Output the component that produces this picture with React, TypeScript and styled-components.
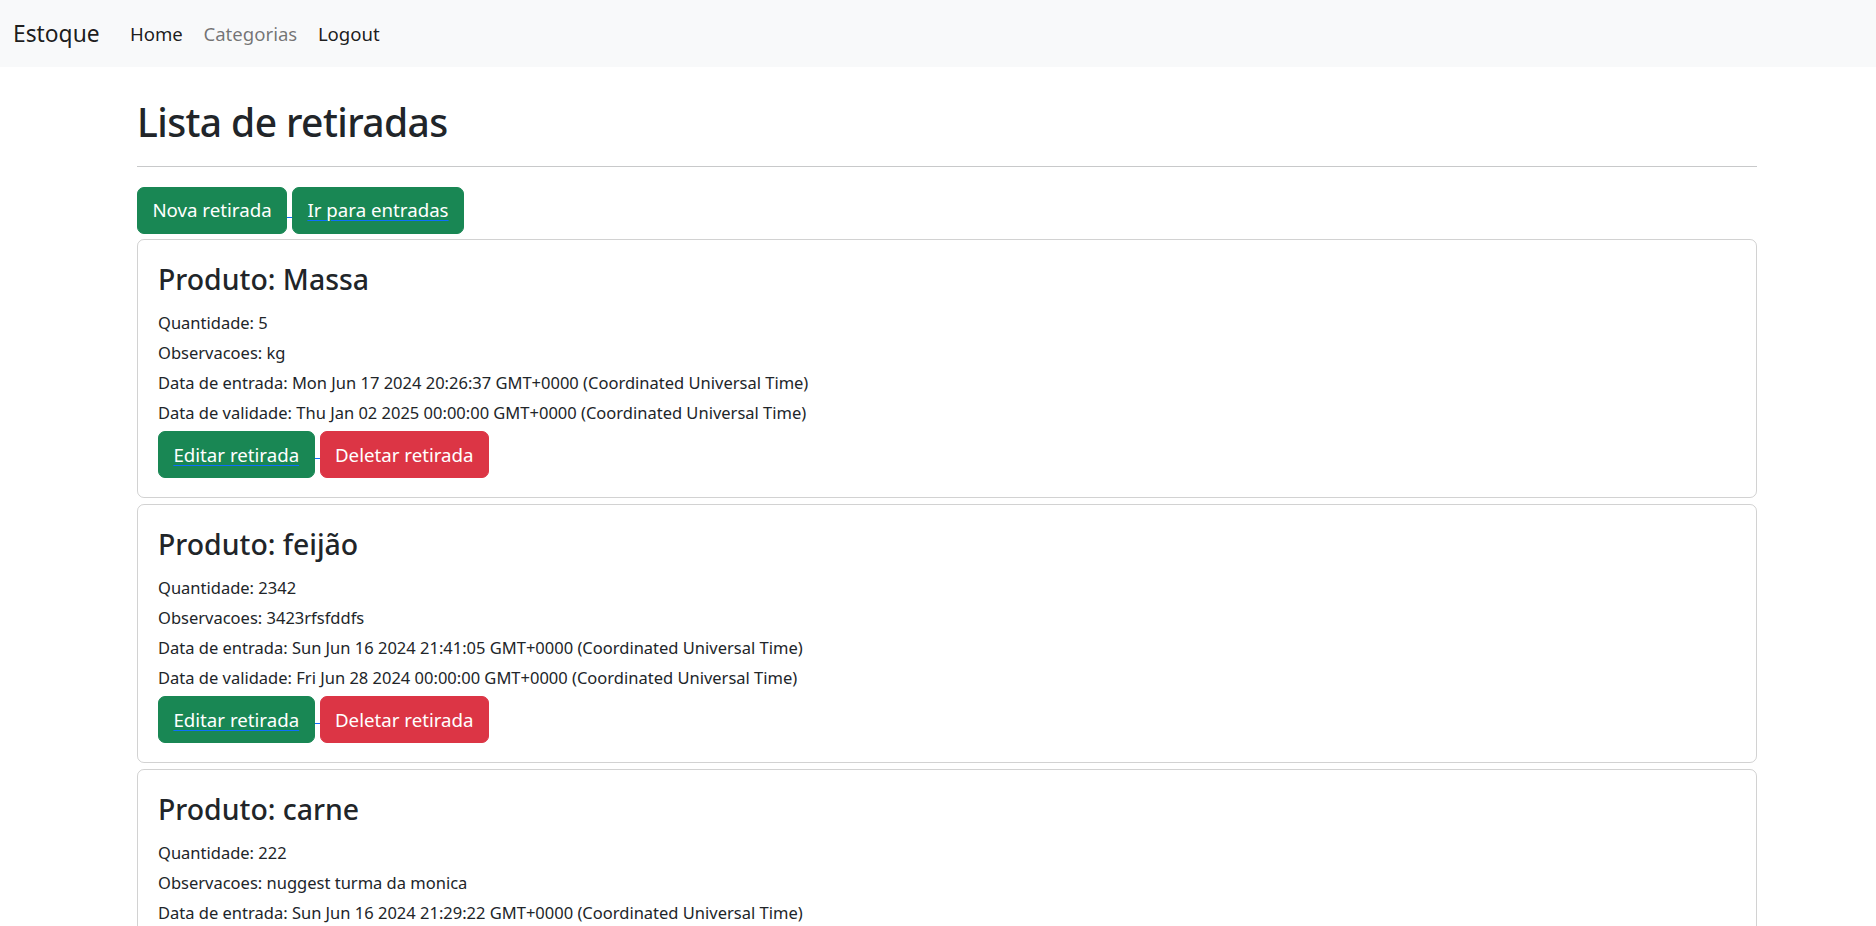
import React from 'react';
import styled, { createGlobalStyle } from 'styled-components';

const GlobalStyle = createGlobalStyle`
  * { box-sizing: border-box; }
  body {
    margin: 0;
    font-family: "Noto Sans", "Open Sans", sans-serif;
    color: #212529;
    background: #ffffff;
  }
`;

const NavBar = styled.nav`
  height: 67px;
  background: #f8f9fa;
  display: flex;
  align-items: center;
  padding: 0 13px;
`;

const Brand = styled.a`
  font-size: 22.8px;
  color: rgba(0, 0, 0, 0.9);
  margin-right: 20px;
  text-decoration: none;
`;

const NavLink = styled.a<{ $muted?: boolean }>`
  font-size: 18.6px;
  padding: 0 10.3px;
  color: ${(p) => (p.$muted ? 'rgba(0, 0, 0, 0.55)' : 'rgba(0, 0, 0, 0.9)')};
  text-decoration: none;
`;

const Main = styled.main`
  padding: 30px 119px 40px 137px;
`;

const Title = styled.h1`
  margin: 0;
  font-size: 39px;
  font-weight: 500;
  letter-spacing: -0.6px;
  line-height: 50px;
`;

const Rule = styled.hr`
  margin: 19px 0 20px;
  border: 0;
  border-top: 1px solid #c8c9ca;
`;

const ButtonRow = styled.div`
  display: flex;
  align-items: flex-start;
`;

const Button = styled.button<{ $variant: 'success' | 'danger'; $underline?: boolean }>`
  height: 47px;
  padding: 0 14.4px;
  border: 1px solid ${(p) => (p.$variant === 'success' ? '#198754' : '#dc3545')};
  background: ${(p) => (p.$variant === 'success' ? '#198754' : '#dc3545')};
  color: #ffffff;
  border-radius: 7px;
  font-family: inherit;
  font-size: 18.7px;
  line-height: 1.5;
  cursor: pointer;
  text-decoration: ${(p) => (p.$underline ? 'underline' : 'none')};
  text-decoration-color: #0d6efd;
  text-decoration-thickness: 1px;
  text-underline-offset: 3px;
`;

const Joiner = styled.span<{ $top: number }>`
  width: 5px;
  height: 1px;
  background: #0d6efd;
  margin-top: ${(p) => p.$top}px;
`;

const CardList = styled.div`
  display: flex;
  flex-direction: column;
  gap: 6px;
  margin-top: 5px;
`;

const Card = styled.div`
  border: 1px solid rgba(0, 0, 0, 0.175);
  border-radius: 7px;
  padding: 22px 20px 18.5px;
`;

const CardTitle = styled.h4`
  margin: 0 0 14px;
  font-size: 28.4px;
  font-weight: 500;
  line-height: 1.2;
`;

const Detail = styled.p`
  margin: 0 0 4.8px;
  font-size: 16.5px;
  line-height: 25.2px;
`;

const CardActions = styled(ButtonRow)`
  margin-top: 6px;
`;

type Retirada = {
  produto: string;
  quantidade: string;
  obs: string;
  entrada: string;
  validade: string;
};

const items: Retirada[] = [
  {
    produto: 'Massa',
    quantidade: '5',
    obs: 'kg',
    entrada: 'Mon Jun 17 2024 20:26:37 GMT+0000 (Coordinated Universal Time)',
    validade: 'Thu Jan 02 2025 00:00:00 GMT+0000 (Coordinated Universal Time)',
  },
  {
    produto: 'feijão',
    quantidade: '2342',
    obs: '3423rfsfddfs',
    entrada: 'Sun Jun 16 2024 21:41:05 GMT+0000 (Coordinated Universal Time)',
    validade: 'Fri Jun 28 2024 00:00:00 GMT+0000 (Coordinated Universal Time)',
  },
  {
    produto: 'carne',
    quantidade: '222',
    obs: 'nuggest turma da monica',
    entrada: 'Sun Jun 16 2024 21:29:22 GMT+0000 (Coordinated Universal Time)',
    validade: 'Sat Jun 22 2024 00:00:00 GMT+0000 (Coordinated Universal Time)',
  },
];

export default function App() {
  return (
    <>
      <GlobalStyle />
      <NavBar>
        <Brand href="#">Estoque</Brand>
        <NavLink href="#">Home</NavLink>
        <NavLink href="#" $muted>
          Categorias
        </NavLink>
        <NavLink href="#">Logout</NavLink>
      </NavBar>
      <Main>
        <Title>Lista de retiradas</Title>
        <Rule />
        <ButtonRow>
          <Button $variant="success">Nova retirada</Button>
          <Joiner $top={30} />
          <Button $variant="success" $underline>
            Ir para entradas
          </Button>
        </ButtonRow>
        <CardList>
          {items.map((it) => (
            <Card key={it.produto}>
              <CardTitle>Produto: {it.produto}</CardTitle>
              <Detail>Quantidade: {it.quantidade}</Detail>
              <Detail>Observacoes: {it.obs}</Detail>
              <Detail>Data de entrada: {it.entrada}</Detail>
              <Detail>Data de validade: {it.validade}</Detail>
              <CardActions>
                <Button $variant="success" $underline>
                  Editar retirada
                </Button>
                <Joiner $top={27} />
                <Button $variant="danger">Deletar retirada</Button>
              </CardActions>
            </Card>
          ))}
        </CardList>
      </Main>
    </>
  );
}
